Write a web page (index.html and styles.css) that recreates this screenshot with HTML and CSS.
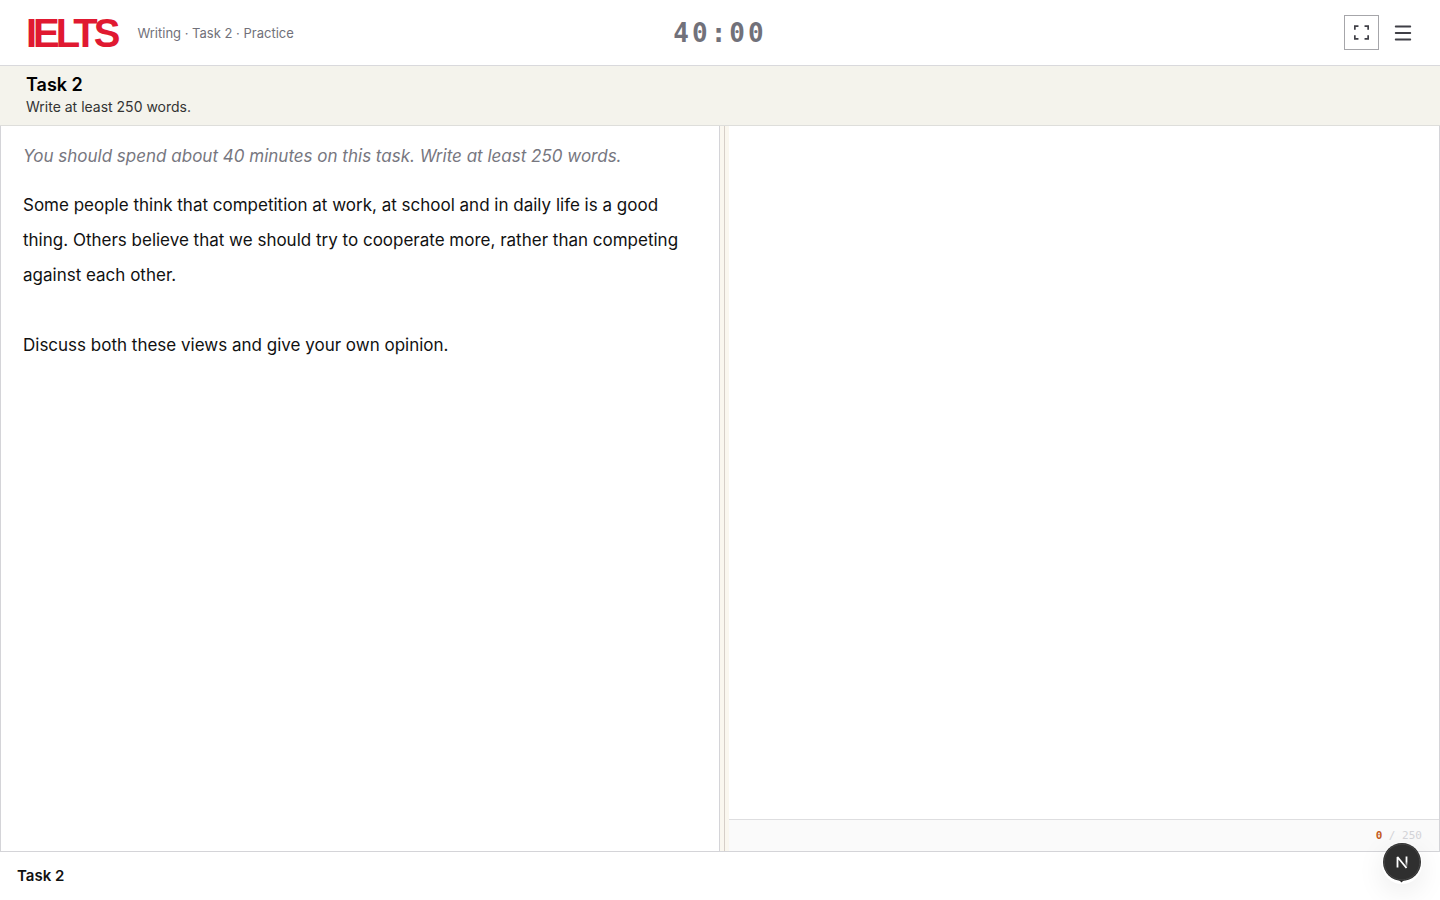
FILE: index.html
```html
<!DOCTYPE html>
<html lang="en">
<head>
<meta charset="utf-8">
<title>IELTS Writing Task 2 Practice</title>
<link rel="stylesheet" href="styles.css">
</head>
<body>
<header class="topbar">
  <div class="brand">
    <span class="logo">IELTS</span>
    <span class="crumb">Writing · Task 2 · Practice</span>
  </div>
  <div class="timer">40:00</div>
  <div class="actions">
    <button class="icon-btn framed" type="button" aria-label="Full screen">
      <svg width="19" height="19" viewBox="0 0 20 20" fill="none" stroke="currentColor" stroke-width="1.800"><path d="M3 7.200V3.300h3.800M13.200 3.300H17v3.900M17 12.800v3.900h-3.800M6.800 16.700H3v-3.900"/></svg>
    </button>
    <button class="icon-btn" type="button" aria-label="Menu">
      <svg width="20" height="20" viewBox="0 0 20 20" fill="none" stroke="currentColor" stroke-width="1.800" stroke-linecap="round"><path d="M2.700 3.500h14.600M2.700 10h14.600M2.700 16.500h14.600"/></svg>
    </button>
  </div>
</header>
<section class="intro">
  <h1 class="intro-title">Task 2</h1>
  <p class="intro-text">Write at least 250 words.</p>
</section>
<main class="panes">
  <article class="prompt">
    <p class="hint">You should spend about 40 minutes on this task. Write at least 250 words.</p>
    <p class="question">Some people think that competition at work, at school and in daily life is a good thing. Others believe that we should try to cooperate more, rather than competing against each other.</p>
    <p class="question">Discuss both these views and give your own opinion.</p>
  </article>
  <div class="divider" role="separator" aria-orientation="vertical"></div>
  <section class="answer">
    <textarea class="editor" aria-label="Your answer"></textarea>
    <div class="count"><span class="count-now">0</span> / 250</div>
  </section>
</main>
<footer class="bottombar">
  <button class="task-tab" type="button">Task 2</button>
</footer>
<button class="dev-badge" type="button" aria-label="Developer tools">
  <svg width="40" height="42" viewBox="0 0 40 42" fill="none">
    <defs><linearGradient id="fade" x1="0" y1="14" x2="0" y2="25" gradientUnits="userSpaceOnUse"><stop offset="0.500" stop-color="#fff"/><stop offset="1" stop-color="#fff" stop-opacity="0.100"/></linearGradient></defs>
    <path d="M17 38h5l-2.500 2.500z" fill="#252525"/>
    <circle cx="20" cy="20" r="19" fill="#2f2f2f"/>
    <circle cx="20" cy="20" r="17.800" stroke="#444"/>
    <path d="M15.500 25.500V15l9 11" stroke="#fff" stroke-width="1.800" stroke-linejoin="bevel"/>
    <path d="M24.500 14.500v11" stroke="url(#fade)" stroke-width="1.800"/>
  </svg>
</button>
</body>
</html>
```

FILE: styles.css
```css
* { box-sizing: border-box; }
body {
  margin: 0;
  min-height: 100vh;
  display: flex;
  flex-direction: column;
  background: #fff;
  color: #111;
  font-family: Inter, "Liberation Sans", sans-serif;
}
h1, p { margin: 0; }
button { font: inherit; color: inherit; background: none; border: 0; padding: 0; cursor: pointer; }

.topbar {
  display: grid;
  grid-template-columns: 1fr auto 1fr;
  align-items: center;
  height: 66px;
  padding: 0 20px;
  border-bottom: 1px solid #d9d9dc;
}
.brand { display: flex; align-items: center; gap: 21px; padding-left: 6px; }
.logo {
  font: bold 40px/40px "Liberation Sans", sans-serif;
  letter-spacing: -4px;
  color: #e01931;
}
.crumb { font-size: 13px; line-height: 20px; color: #71717a; }
.timer {
  font: bold 26px/32px "DejaVu Sans Mono", monospace;
  letter-spacing: 3px;
  color: #71717a;
}
.actions { display: flex; justify-content: flex-end; gap: 6px; }
.icon-btn {
  display: flex;
  align-items: center;
  justify-content: center;
  width: 35px;
  height: 35px;
  color: #3f3f46;
}
.framed { border: 1px solid #a6a6aa; }

.intro {
  height: 60px;
  padding: 7px 26px;
  background: #f4f3ec;
  border-bottom: 1px solid #dededb;
}
.intro-title { font-size: 18px; line-height: 24px; font-weight: 600; color: #000; }
.intro-text { font-size: 14px; line-height: 20px; color: #333; }

.panes {
  flex: 1;
  display: grid;
  grid-template-columns: 50% 9px 1fr;
  border: 1px solid #d4d4d8;
  border-top: 0;
}
.prompt { padding: 16px 22px; font-size: 17px; border-right: 1px solid #d4d4d8; }
.hint { margin-bottom: 18px; line-height: 28px; font-style: italic; color: #77777f; }
.question { line-height: 35px; }
.question + .question { margin-top: 35px; }
.divider { position: relative; background: #faf7ef; }
.divider::after {
  content: "";
  position: absolute;
  top: 0;
  bottom: 0;
  left: 4px;
  width: 1px;
  background: #d6cfc8;
}
.answer { display: flex; flex-direction: column; }
.editor {
  flex: 1;
  width: 100%;
  border: 0;
  padding: 20px;
  resize: none;
  outline: none;
  background: #fff;
  font: inherit;
}
.count {
  height: 32px;
  padding-right: 17px;
  border-top: 1px solid #dedee0;
  background: #fafafa;
  color: #d4d4d8;
  font: 11px/31px "DejaVu Sans Mono", monospace;
  text-align: right;
}
.count-now { color: #c45a1c; font-weight: bold; }

.bottombar { display: flex; align-items: center; height: 48px; padding: 0 17px; }
.task-tab { font-size: 15px; line-height: 20px; font-weight: 600; }
.dev-badge {
  position: fixed;
  right: 18px;
  bottom: 16px;
  width: 40px;
  height: 42px;
  border-radius: 20px;
  box-shadow: 0 8px 28px rgba(0, 0, 0, 0.08);
}
.dev-badge svg { display: block; }
```
